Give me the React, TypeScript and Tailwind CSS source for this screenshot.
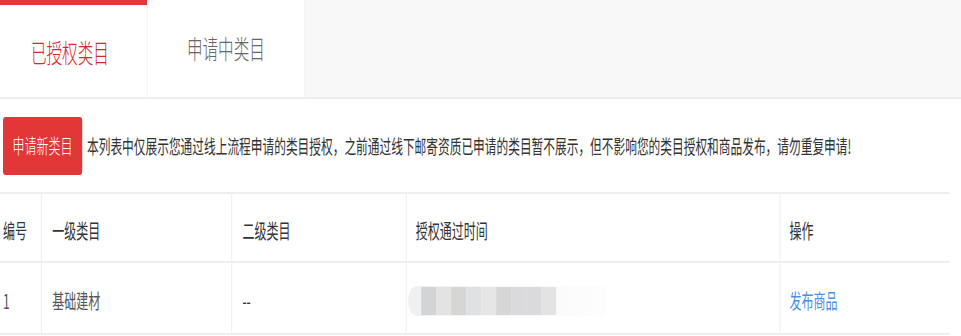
import React from "react";

const cols = "grid grid-cols-[68px_317px_291px_623px_284px]";

const blocks = ["#d3d4d6", "#e2e3e2", "#d6d7d4", "#e0e1e3", "#e6e6e6", "#d6d6d6", "#dadadc", "#dadadc", "#e3e3e3"];

const App = () => {
  return (
    <div className="h-[336px] w-full overflow-hidden bg-white">
      <div className="w-[1602px] origin-top-left scale-x-[0.6] font-['Noto_Sans_CJK_SC','Noto_Sans',sans-serif]">
        {/* tabs */}
        <div className="flex h-[99px] border-b-2 border-[#eeeeee] bg-[#f8f8f8]">
          <div className="flex w-[245px] items-center justify-center border-t-[5px] border-[#e3383b] bg-white pr-[12px] text-[26px] font-light text-[#d8252b]">
            已授权类目
          </div>
          <div className="flex w-[263px] items-center justify-center border-x border-[#eeeeee] bg-white pb-[2px] text-[26px] font-light text-[#666666]">
            申请中类目
          </div>
          <div className="flex-1" />
        </div>

        {/* toolbar */}
        <div className="flex items-center gap-[8px] pl-[5px] pt-[18px]">
          <button className="flex h-[58px] w-[132px] items-center justify-center rounded-[4px] bg-[#e23637] text-[20px] font-light text-white">
            申请新类目
          </button>
          <span className="whitespace-nowrap text-[19.5px] text-[#333333]">
            本列表中仅展示您通过线上流程申请的类目授权，之前通过线下邮寄资质已申请的类目暂不展示，但不影响您的类目授权和商品发布，请勿重复申请!
          </span>
        </div>

        {/* table */}
        <div className="mt-[17px] w-[1583px] border-t-2 border-[#eeeeee] text-[20px]">
          <div className={`${cols} h-[69px] border-b-2 border-[#eeeeee] text-[#333333]`}>
            <div className="flex items-center pl-[5px] pt-[6px]">编号</div>
            <div className="flex items-center border-l-2 border-[#f0f0f0] pl-[17px] pt-[6px]">一级类目</div>
            <div className="flex items-center border-l-2 border-[#f0f0f0] pl-[17px] pt-[6px]">二级类目</div>
            <div className="flex items-center border-l-2 border-[#f0f0f0] pl-[15px] pt-[6px]">授权通过时间</div>
            <div className="flex items-center border-l-2 border-[#f0f0f0] pl-[15px] pt-[6px]">操作</div>
          </div>
          <div className={`${cols} h-[72px] border-b-2 border-[#eeeeee]`}>
            <div className="flex items-center pl-[5px] pt-[6px] text-[#555555]">1</div>
            <div className="flex items-center border-l-2 border-[#f0f0f0] pl-[17px] pt-[6px] text-[#555555]">基础建材</div>
            <div className="flex items-center border-l-2 border-[#f0f0f0] pl-[17px] pt-[6px] text-[#333333]">--</div>
            <div className="flex items-center border-l-2 border-[#f0f0f0] pl-[2px] pt-[6px]">
              <div className="flex h-[30px] w-[330px] items-center rounded-l-full bg-gradient-to-r from-[#f0f0f0] via-[#f8f8f8] to-[#fdfdfd] pl-[22px]">
                {blocks.map((c, i) => (
                  <div key={i} className="h-[28px] w-[25px]" style={{ backgroundColor: c }} />
                ))}
              </div>
            </div>
            <div className="flex items-center border-l-2 border-[#f0f0f0] pl-[15px] pt-[6px] text-[#4a90e2]">发布商品</div>
          </div>
        </div>
      </div>
    </div>
  );
};

export default App;
